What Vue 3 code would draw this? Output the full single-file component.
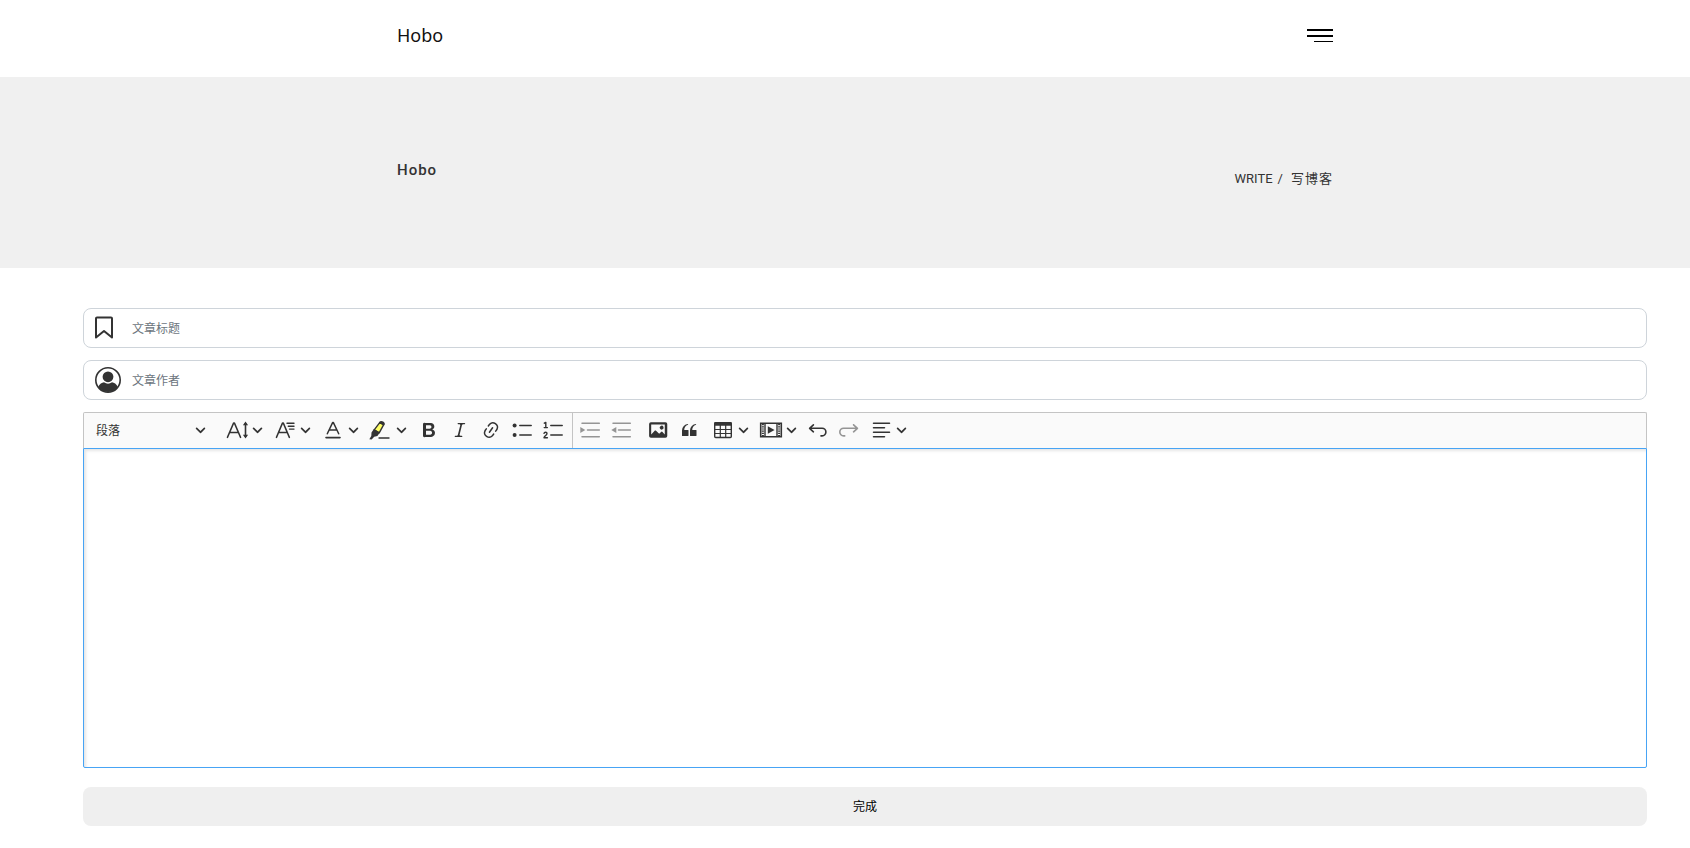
<script setup>
import { ref } from 'vue'

const title = ref('')
const author = ref('')
const style = ref('p')

const chevron = 'M.941 4.523a.75.75 0 1 1 1.06-1.06l3.006 3.005 3.005-3.005a.75.75 0 1 1 1.06 1.06l-3.549 3.55a.75.75 0 0 1-1.168-.136L.941 4.523z'

const fill = (d) => `<path d="${d}" fill="currentColor"/>`
const line = (d, w = 1.5) => `<path d="${d}" fill="none" stroke="currentColor" stroke-width="${w}" stroke-linecap="round" stroke-linejoin="round"/>`

const groups = [
  {
    name: 'text',
    items: [
      { label: '字号', menu: true, svg: line('M.5 17.3 6.600 3h.8L13.500 17.3M2.800 12.500h8.400', 1.6) + line('M18.500 3.500v13', 1.6) + fill('M18.500 1.600l2.600 3.600h-5.200zM18.500 18.400l2.600-3.600h-5.200z') },
      { label: '字体', menu: true, svg: line('M1.500 17.3 7.500 3h.8l6 14.3M3.800 12.500h8.200', 1.6) + line('M12 3.300h7M13.300 6.200h5.700M14.500 9.100h4.500', 1.4) },
      { label: '字体颜色', menu: true, svg: line('M4.3 13.8 9.6 2.6h.8l5.3 11.2M6.1 10h7.8', 1.5) + line('M3 17.6h14', 1.6) },
      { label: '高亮', menu: true, svg: '<path d="M8.700 2.600 12.700 4.700 8.200 12.800 3.200 9.800z" fill="#ffff66" stroke="currentColor" stroke-width="1.400" stroke-linejoin="round"/>' + fill('M8.400 1.800C9.500.3 13.800 1.300 13.900 4L13 5.500 8 2.900zM2.900 9 8.900 12.500 6.400 16 3.200 16.800.6 19.400l-2.300-.2L.3 16l.2-3.600z') + line('M8 18h10', 1.4) },
      { label: '加粗', svg: fill('M10.187 17H5.773c-.637 0-1.092-.138-1.364-.415-.273-.277-.409-.718-.409-1.323V4.738c0-.617.14-1.062.419-1.332.279-.27.73-.406 1.354-.406h4.68c.69 0 1.288.041 1.793.124.506.083.96.242 1.36.478.341.197.644.447.906.75a3.262 3.262 0 0 1 .808 2.162c0 1.401-.722 2.426-2.167 3.075C15.05 10.175 16 11.315 16 13.01a3.756 3.756 0 0 1-2.296 3.504 6.1 6.1 0 0 1-1.517.377c-.571.073-1.238.11-2 .11zm-.217-6.217H7v4.087h3.069c1.977 0 2.965-.69 2.965-2.072 0-.707-.256-1.22-.768-1.537-.512-.319-1.277-.478-2.296-.478zM7 5.13v3.619h2.606c.729 0 1.292-.067 1.69-.2a1.6 1.6 0 0 0 .91-.765c.165-.267.247-.566.247-.897 0-.707-.26-1.176-.778-1.409-.519-.232-1.31-.348-2.375-.348H7z') + line('M5.500 4v12', 2.4) },
      { label: '倾斜', svg: fill('m9.586 14.633.021.004c-.036.335.095.655.393.962.082.083.173.15.274.201h1.474a.6.6 0 1 1 0 1.2H5.304a.6.6 0 0 1 0-1.2h1.15c.474-.07.809-.182 1.005-.334.157-.122.291-.32.404-.597l2.416-9.55a1.053 1.053 0 0 0-.281-.823 1.12 1.12 0 0 0-.442-.296H8.15a.6.6 0 0 1 0-1.2h6.443a.6.6 0 1 1 0 1.2h-1.195c-.376.056-.65.155-.823.296-.215.175-.423.439-.623.79l-2.366 9.347z') },
      { label: '超链接', svg: fill('m11.077 15 .991-1.416a.75.75 0 1 1 1.229.86l-1.148 1.64a.748.748 0 0 1-.217.206 5.251 5.251 0 0 1-8.503-5.955.741.741 0 0 1 .12-.274l1.147-1.639a.75.75 0 1 1 1.228.86L4.933 10.7l.006.003a3.75 3.75 0 0 0 6.132 4.294l.006.004zm5.494-5.335a.748.748 0 0 1-.12.274l-1.147 1.639a.75.75 0 1 1-1.228-.86l.86-1.23a3.75 3.75 0 0 0-6.144-4.301l-.86 1.229a.75.75 0 0 1-1.229-.86l1.148-1.64a.748.748 0 0 1 .217-.206 5.251 5.251 0 0 1 8.503 5.955zm-4.563-2.532a.75.75 0 0 1 .184 1.045l-3.155 4.505a.75.75 0 1 1-1.229-.86l3.155-4.506a.75.75 0 0 1 1.045-.184z') },
      { label: '项目列表', svg: line('M7.800 5.500h11.400M7.800 15h11.400') + '<circle cx="2.600" cy="5.500" r="2" fill="currentColor"/><circle cx="2.600" cy="15" r="2" fill="currentColor"/>' },
      { label: '编号列表', svg: line('M7.8 5.5h11.4M7.8 15h11.4') + line('M1.3 3.2 2.8 2.4v5M1.2 7.6h3.2', 1.4) + line('M1 13.4c.3-1.5 3-1.5 3 .1C4 15 1.500 16 1 17.800h3.400', 1.4) },
    ],
  },
  {
    name: 'indent',
    items: [
      { label: '增加缩进', off: true, svg: line('M2 3.300h17.300M7.500 10h11.800M2 16.700h17.300') + fill('M.3 6.900 5.300 10 .3 13z') },
      { label: '减少缩进', off: true, svg: line('M2 3.300h17.300M7.500 10h11.800M2 16.700h17.300') + fill('M5.300 6.900.3 10l5 3z') },
    ],
  },
  {
    name: 'insert',
    items: [
      { label: '插入图像', svg: fill('M6.91 10.54c.26-.23.64-.21.88.03l3.36 3.14 2.23-2.06a.64.64 0 0 1 .87 0l2.52 2.97V4.5H3.2v10.12l3.71-4.08zm10.27-7.51c.6 0 1.09.47 1.09 1.05v11.84c0 .59-.49 1.06-1.09 1.06H2.79c-.6 0-1.09-.47-1.09-1.06V4.08c0-.58.49-1.05 1.1-1.05h14.38zm-5.22 5.56a1.96 1.96 0 1 1 3.4-1.96 1.96 1.96 0 0 1-3.4 1.96z') + '<rect x="1.900" y="3" width="16.600" height="14" rx="1" fill="none" stroke="currentColor" stroke-width="1.500"/>' },
      { label: '块引用', svg: fill('M3 10.423a6.5 6.5 0 0 1 6.056-6.408l.038.67C6.448 5.423 5.354 7.663 5.22 10H9c.552 0 .5.432.5.986v4.511c0 .554-.448.503-1 .503h-5c-.552 0-.5-.449-.5-1.003v-4.574zm8 0a6.5 6.5 0 0 1 6.056-6.408l.038.67c-2.646.739-3.74 2.979-3.873 5.315H17c.552 0 .5.432.5.986v4.511c0 .554-.448.503-1 .503h-5c-.552 0-.5-.449-.5-1.003v-4.574z') },
    ],
  },
  {
    name: 'media',
    items: [
      { label: '插入表格', menu: true, svg: line('M1.700 4.500v12a1 1 0 0 0 1 1h14.600a1 1 0 0 0 1-1v-12', 1.4) + line('M2 9.500h16M2 13.500h16M7.300 5v12M12.700 5v12', 1.2) + fill('M1 5.800V3.400C1 2.500 1.600 2 2.400 2h15.200c.8 0 1.400.5 1.400 1.400v2.400z') },
      { label: '插入媒体', menu: true, svg: '<path d="M-.3 3.200h20.600v13.600H-.3z" fill="none" stroke="currentColor" stroke-width="1.6"/><path d="M4 3v14M16 3v14" stroke="currentColor" stroke-width="1.400"/><path d="M1.900 4v12M18.100 4v12" stroke="currentColor" stroke-width="2" stroke-dasharray="1.200 1"/>' + fill('M6.800 6.200 13.600 10l-6.800 3.800z') },
      { label: '撤销', svg: line('M4.400 4.800.6 8.300l3.800 3.500M.8 8.300h12.300a3.700 3.700 0 0 1 0 7.600H12', 1.6) },
      { label: '重做', off: true, svg: line('M13.600 4.800l3.800 3.500-3.800 3.500M17.200 8.300H3.600a3.700 3.700 0 0 0 0 7.600h1.100', 1.6) },
      { label: '对齐', menu: true, svg: line('M2.500 3.300h16M2.500 7.800h11M2.500 12.200h16M2.500 16.700h11') },
    ],
  },
]
</script>

<template>
  <div class="page">
    <header class="frame">
      <div class="container bar">
        <a class="brand" href="#">Hobo</a>
        <button class="burger" type="button" aria-label="菜单"><i></i><i></i><i></i></button>
      </div>
    </header>

    <section class="frame banner">
      <div class="container">
        <h1>Hobo</h1>
        <nav class="crumbs"><a href="#">WRITE</a><span>/</span><a href="#" class="here">写博客</a></nav>
      </div>
    </section>

    <form class="form" @submit.prevent>
      <label class="field">
        <svg viewBox="0 0 26 26" aria-hidden="true"><path d="M1 3.500a1 1 0 0 1 1-1h14a1 1 0 0 1 1 1v19L9 16l-8 6.500z" fill="none" stroke="currentColor" stroke-width="2" stroke-linejoin="round" /></svg>
        <input v-model="title" type="text" placeholder="文章标题" aria-label="文章标题" />
      </label>
      <label class="field">
        <svg viewBox="0 0 26 26" aria-hidden="true"><circle cx="13" cy="13" r="12.200" fill="none" stroke="currentColor" stroke-width="1.600" /><circle cx="13" cy="9.800" r="5.400" fill="currentColor" /><path d="M3.200 20C4.500 17 7 15.500 9 15.300c2.500 1.800 5.500 1.800 8 0 2 .2 4.500 1.700 5.800 4.700A12 12 0 0 1 13 25 12 12 0 0 1 3.200 20z" fill="currentColor" /></svg>
        <input v-model="author" type="text" placeholder="文章作者" aria-label="文章作者" />
      </label>

      <div class="editor">
        <div class="toolbar" role="toolbar" aria-label="编辑器工具栏">
          <div class="heading">
            <select v-model="style" aria-label="标题">
              <option value="p">段落</option>
            </select>
            <svg class="chev" viewBox="0 0 10 10" aria-hidden="true"><path :d="chevron" fill="currentColor" /></svg>
          </div>
          <div v-for="g in groups" :key="g.name" class="group" :class="g.name">
            <button v-for="b in g.items" :key="b.label" type="button" class="tool" :class="{ menu: b.menu }" :disabled="b.off" :aria-label="b.label">
              <svg class="icon" viewBox="0 0 20 20" aria-hidden="true" v-html="b.svg"></svg>
              <svg v-if="b.menu" class="chev" viewBox="0 0 10 10" aria-hidden="true"><path :d="chevron" fill="currentColor" /></svg>
            </button>
          </div>
        </div>
        <div class="content" contenteditable="true" role="textbox" aria-multiline="true" aria-label="正文"></div>
      </div>

      <button class="done" type="submit">完成</button>
    </form>
  </div>
</template>

<style>
body {
  background: #fff;
}
</style>

<style scoped>
.page {
  padding-bottom: 20px;
  font-family: "Noto Sans", "Noto Sans CJK SC", sans-serif;
  color: #333;
}
.page *,
.page {
  box-sizing: border-box;
}
a {
  color: inherit;
  text-decoration: none;
}
button,
input,
select {
  font: inherit;
  color: inherit;
}
.frame {
  padding-left: 40px;
}
.container {
  display: flex;
  justify-content: space-between;
  align-items: flex-start;
  max-width: 976px;
  padding: 0 20px;
  margin: 0 auto;
}
.bar {
  height: 77px;
}
.brand {
  margin-top: 21px;
  font-size: 18px;
  line-height: 28px;
  color: #111;
}
.burger {
  display: flex;
  flex-direction: column;
  align-items: flex-end;
  gap: 4px;
  width: 26px;
  margin-top: 29px;
  padding: 0;
  border: 0;
  background: none;
}
.burger i {
  width: 26px;
  height: 2px;
  background: #000;
}
.burger i:last-child {
  width: 19px;
  height: 1px;
}
.banner {
  padding-top: 79px;
  padding-bottom: 75px;
  background: #f0f0f0;
}
h1 {
  margin: 0;
  font: 500 15px/28px Roboto, sans-serif;
  letter-spacing: 1px;
}
.crumbs {
  display: flex;
  gap: 5px;
  margin-top: 9px;
  font: 400 13px/28px Roboto, "Noto Sans CJK SC", sans-serif;
}
.crumbs .here {
  margin-left: 3px;
  letter-spacing: 1px;
}
.form {
  display: flex;
  flex-direction: column;
  gap: 12px;
  margin: 40px 43px 0 83px;
  font-family: "Noto Sans CJK SC", sans-serif;
  font-size: 12px;
}
.field {
  display: flex;
  align-items: center;
  gap: 11px;
  height: 40px;
  padding: 0 11px;
  border: 1px solid #ced4da;
  border-radius: 8px;
}
.field svg {
  flex: none;
  width: 26px;
  height: 26px;
}
.field input {
  flex: 1;
  min-width: 0;
  padding: 0 0 2px;
  border: 0;
  outline: 0;
  background: none;
}
.field input::placeholder {
  color: #6c757d;
  opacity: 1;
}
.toolbar {
  display: flex;
  height: 36px;
  border: 1px solid #c4c4c4;
  border-bottom: 0;
  border-radius: 2px 2px 0 0;
  background: #fafafa;
}
.heading {
  display: grid;
  align-items: center;
  width: 124px;
  padding-bottom: 2px;
  margin-right: 14px;
}
.heading > * {
  grid-area: 1 / 1;
}
.heading select {
  width: 100%;
  height: 32px;
  padding: 0 12px;
  appearance: none;
  border: 0;
  background: none;
}
.heading .chev {
  justify-self: end;
  margin-right: 2px;
  pointer-events: none;
}
.group {
  display: flex;
  align-items: center;
  gap: 1px;
  padding-bottom: 2px;
}
.group.indent {
  margin-left: 4px;
  padding-left: 2px;
  border-left: 1px solid #c4c4c4;
}
.group.insert {
  margin-left: 7px;
}
.group.media {
  margin-left: 4px;
}
.tool {
  display: flex;
  align-items: center;
  width: 30px;
  height: 30px;
  padding: 0 5px;
  border: 0;
  background: none;
}
.tool.menu {
  width: 47px;
  gap: 5px;
}
.tool:disabled {
  opacity: 0.5;
}
.icon {
  flex: none;
  width: 20px;
  height: 20px;
  overflow: visible;
}
.chev {
  flex: none;
  width: 11px;
  height: 11px;
}
.content {
  height: 320px;
  border: 1px solid #47a4f5;
  border-radius: 0 0 2px 2px;
  outline: 0;
  box-shadow: inset 2px 2px 3px rgba(0, 0, 0, 0.1);
}
.done {
  height: 39px;
  margin-top: 7px;
  padding: 0 0 2px;
  border: 0;
  border-radius: 8px;
  background: #efefef;
  color: #000;
}
</style>
